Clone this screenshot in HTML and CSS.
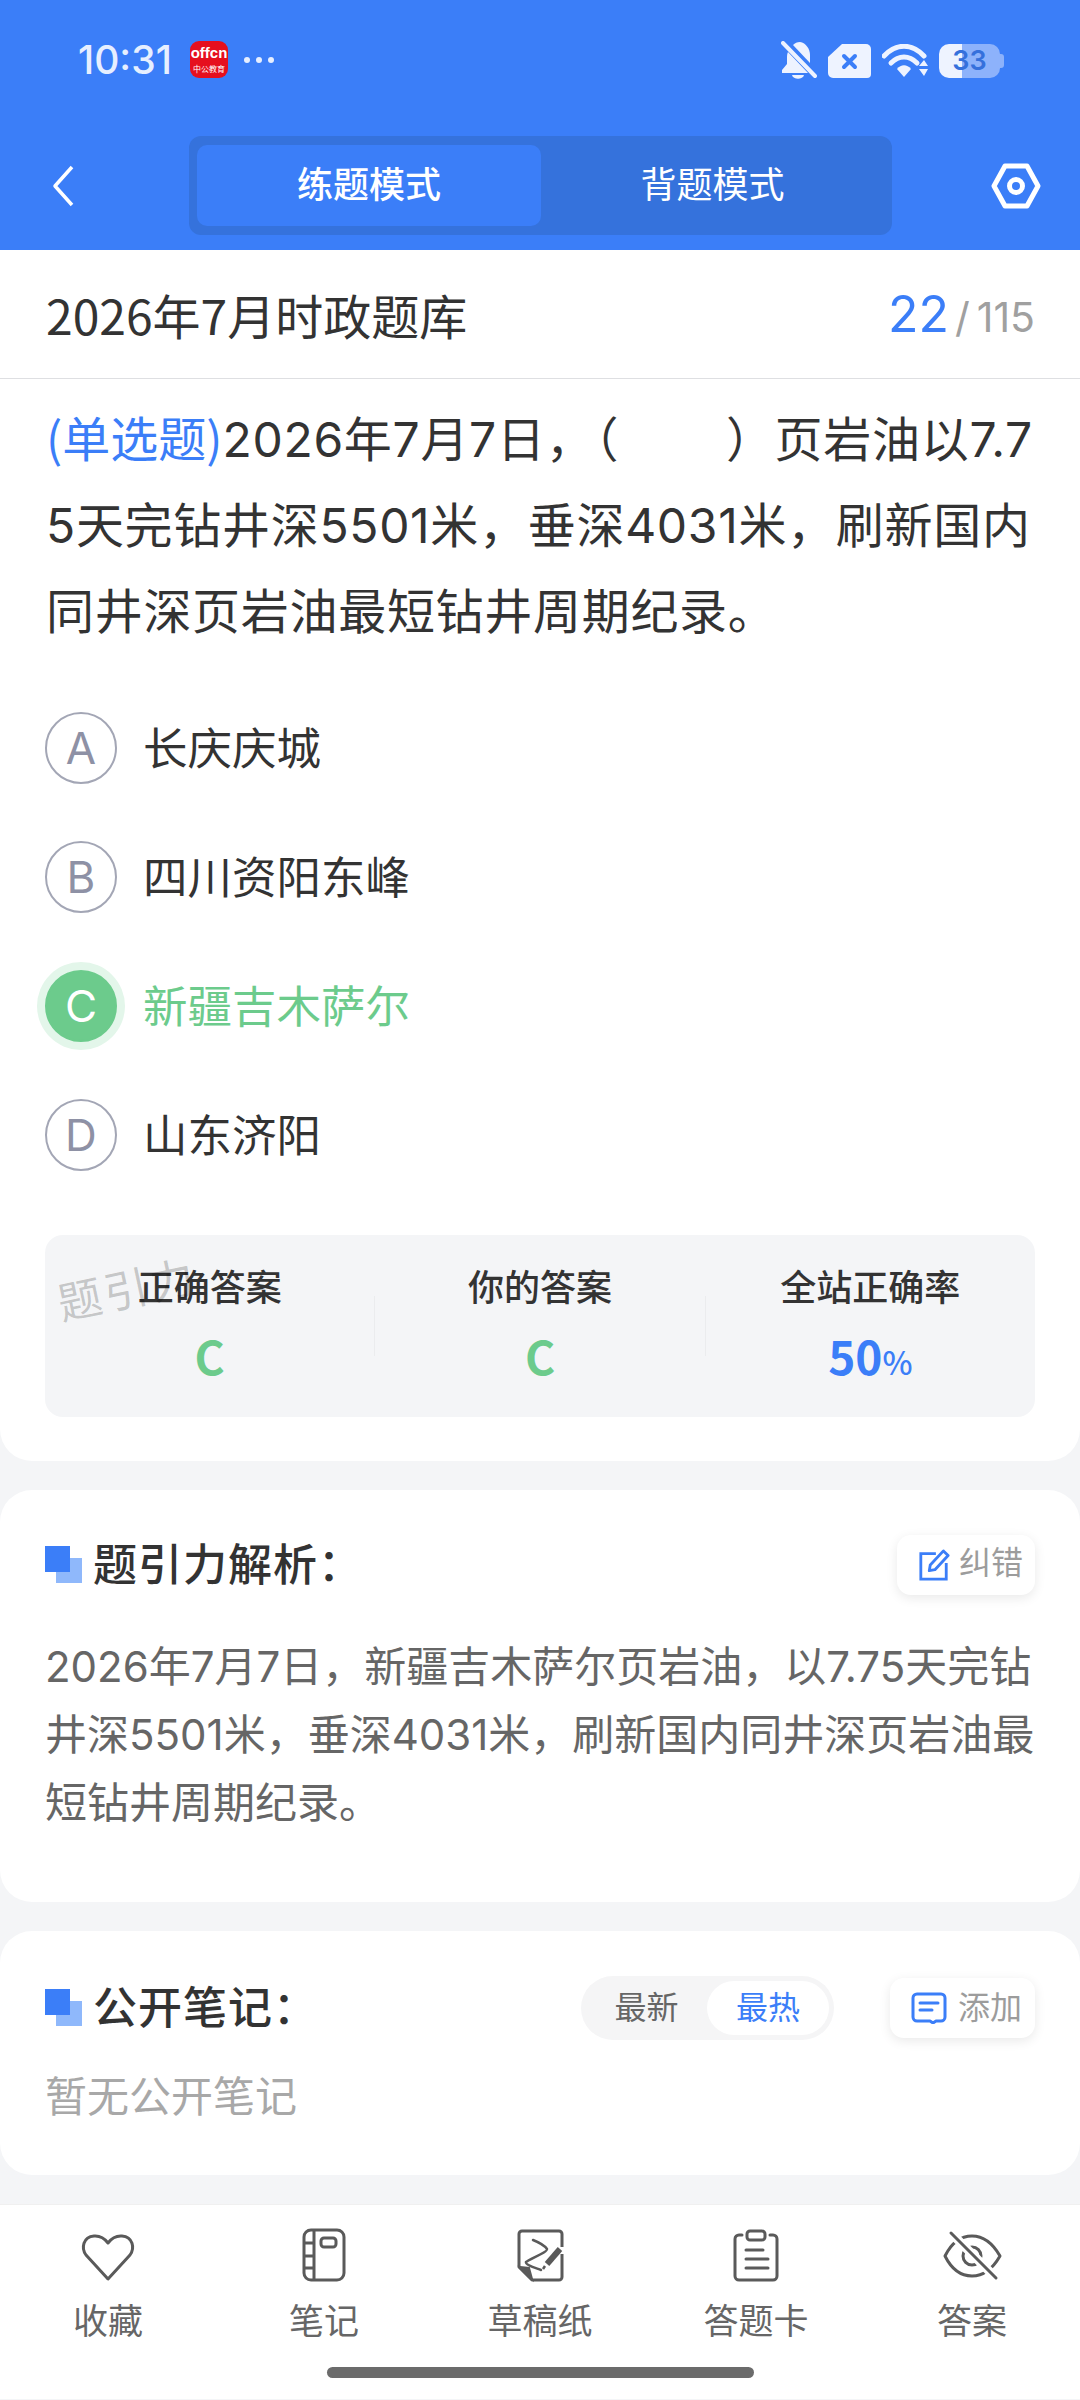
FILE: index.html
```html
<!DOCTYPE html>
<html lang="zh-CN">
<head>
    <meta charset="UTF-8">
    <meta name="viewport" content="width=device-width, initial-scale=1.0">
    <title>练题模式</title>
    <link rel="stylesheet" href="styles.css">
</head>
<body>
    <header class="header">
        <div class="status">
            <span class="time">10:31</span>
            <div class="app-icon"><span class="app-en">offcn</span><span class="app-cn">中公教育</span></div>
            <div class="dots"><i></i><i></i><i></i></div>
            <div class="status-right">
                <svg class="bell" viewBox="0 0 36 39" width="36" height="39">
                    <path d="M7 11c-1 2-1 4-1 6v6l-5 6v3h26z" fill="#eef3ff"/>
                    <path d="M12 4c2-2 4-3 7-3 6 1 10 7 10 13v8z" fill="#eef3ff"/>
                    <path d="M11 34h12c-1 5-11 5-12 0z" fill="#eef3ff"/>
                    <path d="M2 2l32 33" stroke="#eef3ff" stroke-width="4" stroke-linecap="round"/>
                </svg>
                <svg class="sim" viewBox="0 0 43 34" width="43" height="34">
                    <path d="M14 0h24a5 5 0 0 1 5 5v25a4 4 0 0 1-4 4H5a5 5 0 0 1-5-5V13z" fill="#eef3ff"/>
                    <path d="M16 12l11 11M27 12L16 23" stroke="#3b7ef8" stroke-width="4" stroke-linecap="round"/>
                </svg>
                <svg class="wifi" viewBox="0 0 46 34" width="46" height="34">
                    <path d="M2 12c12-13 28-13 40 0" fill="none" stroke="#eef3ff" stroke-width="5" stroke-linecap="round"/>
                    <path d="M9 19c8-8 18-8 26 0" fill="none" stroke="#eef3ff" stroke-width="5" stroke-linecap="round"/>
                    <path d="M15 25c4-5 10-5 14 0l-7 8z" fill="#eef3ff"/>
                    <path d="M37 22l5-6 4 6zM37 25h9l-4 7z" fill="#eef3ff"/>
                </svg>
                <div class="battery"><span class="battery-body">33</span><i class="battery-nub"></i></div>
            </div>
        </div>
        <div class="nav">
            <svg class="back" viewBox="0 0 22 42" width="22" height="42">
                <path d="M20 2L3 21l17 19" fill="none" stroke="#fff" stroke-width="3.500" stroke-linejoin="round"/>
            </svg>
            <div class="tabs">
                <div class="tab tab-active">练题模式</div>
                <div class="tab">背题模式</div>
            </div>
            <svg class="gear" viewBox="0 0 50 46" width="50" height="46">
                <path d="M14 3h22l11 20-11 20H14L3 23z" fill="none" stroke="#fff" stroke-width="5" stroke-linejoin="round"/>
                <circle cx="25" cy="23" r="6.500" fill="none" stroke="#fff" stroke-width="5"/>
            </svg>
        </div>
    </header>

    <section class="card card-question">
        <div class="paper-title">
            <span class="paper-name">2026年7月时政题库</span>
            <span class="progress"><b>22</b><em>/</em>115</span>
        </div>
        <p class="question"><span class="q-type">(单选题)</span>2026年7月7日，（　　&#8201;）页岩油以7.7<br>5天完钻井深5501米，垂深4031米，刷新国内<br>同井深页岩油最短钻井周期纪录。</p>

        <div class="options">
            <div class="option"><span class="letter">A</span><span class="option-text">长庆庆城</span></div>
            <div class="option"><span class="letter">B</span><span class="option-text">四川资阳东峰</span></div>
            <div class="option option-right"><span class="letter">C</span><span class="option-text">新疆吉木萨尔</span></div>
            <div class="option"><span class="letter">D</span><span class="option-text">山东济阳</span></div>
        </div>

        <div class="answers">
            <span class="watermark">题引力</span>
            <div class="stat"><span class="stat-label">正确答案</span><span class="stat-value green">C</span></div>
            <i class="divider"></i>
            <div class="stat"><span class="stat-label">你的答案</span><span class="stat-value green">C</span></div>
            <i class="divider"></i>
            <div class="stat"><span class="stat-label">全站正确率</span><span class="stat-value blue">50<small>%</small></span></div>
        </div>
    </section>

    <section class="card card-analysis">
        <div class="section-head">
            <div class="section-title"><i class="mark"></i><span>题引力解析：</span></div>
            <div class="mini-btn">
                <svg viewBox="0 0 34 34" width="32" height="32">
                    <path d="M19 5H3v27h27V15" fill="none" stroke="#3b7ef8" stroke-width="3"/>
                    <path d="M13 17L27 2l5 5-14 15-6 1z" fill="none" stroke="#3b7ef8" stroke-width="3" stroke-linejoin="round"/>
                </svg>
                <span>纠错</span>
            </div>
        </div>
        <p class="analysis">2026年7月7日，新疆吉木萨尔页岩油，以7.75天完钻<br>井深5501米，垂深4031米，刷新国内同井深页岩油最<br>短钻井周期纪录。</p>
    </section>

    <section class="card card-notes">
        <div class="section-head">
            <div class="section-title"><i class="mark"></i><span>公开笔记：</span></div>
            <div class="toggle">
                <span class="toggle-item">最新</span>
                <span class="toggle-item toggle-on">最热</span>
            </div>
            <div class="mini-btn mini-add">
                <svg viewBox="0 0 36 32" width="36" height="32">
                    <path d="M6 2h24a4 4 0 0 1 4 4v19a4 4 0 0 1-4 4h-5l-3 2-3-2H6a4 4 0 0 1-4-4V6a4 4 0 0 1 4-4z" fill="none" stroke="#3b7ef8" stroke-width="3" stroke-linejoin="round"/>
                    <path d="M9 11h18M9 18h12" stroke="#3b7ef8" stroke-width="3" stroke-linecap="round"/>
                </svg>
                <span>添加</span>
            </div>
        </div>
        <p class="empty">暂无公开笔记</p>
    </section>

    <nav class="toolbar">
        <div class="tools">
            <div class="tool">
                <svg viewBox="0 0 60 60" width="60" height="60">
                    <path d="M30 54L8 30C3 23 5 12 16 11c6-.5 11 3 14 7 3-4 8-7.500 14-7 11 1 13 12 8 19z" fill="none" stroke="#5a5a5a" stroke-width="3" stroke-linejoin="round"/>
                </svg>
                <span>收藏</span>
            </div>
            <div class="tool">
                <svg viewBox="0 0 60 60" width="60" height="60" fill="none" stroke="#5a5a5a" stroke-width="3">
                    <rect x="10" y="5" width="40" height="50" rx="7"/>
                    <path d="M20 5v50M10 18h10M10 31h10M10 43h10"/>
                    <rect x="27" y="13" width="15" height="9" rx="3"/>
                </svg>
                <span>笔记</span>
            </div>
            <div class="tool">
                <svg viewBox="0 0 60 60" width="60" height="60" fill="none" stroke="#5a5a5a" stroke-width="3">
                    <path d="M52 22V9a3 3 0 0 0-3-3H12a3 3 0 0 0-3 3v33l13 13h27a3 3 0 0 0 3-3V29" stroke-linejoin="round"/>
                    <path d="M10 42l9 1 3 11z" fill="#5a5a5a" stroke-width="2"/>
                    <path d="M23 15c5 2 12 6 14 9 1 3-18 10-21 13-1 3 10 6 15 8" stroke-width="2.500" stroke-linecap="round"/>
                    <path d="M37 39l13-15" stroke-width="6"/>
                    <path d="M33 44l2-3" stroke-width="2.500"/>
                </svg>
                <span>草稿纸</span>
            </div>
            <div class="tool">
                <svg viewBox="0 0 60 60" width="60" height="60" fill="none" stroke="#5a5a5a" stroke-width="3">
                    <path d="M16 10h-3a4 4 0 0 0-4 4v37a4 4 0 0 0 4 4h34a4 4 0 0 0 4-4V14a4 4 0 0 0-4-4h-3" stroke-linecap="round"/>
                    <rect x="21" y="6" width="18" height="9" rx="3"/>
                    <path d="M20 25h17M20 34h22M20 43h22" stroke-linecap="round"/>
                </svg>
                <span>答题卡</span>
            </div>
            <div class="tool">
                <svg viewBox="0 0 60 60" width="60" height="60" fill="none" stroke="#5a5a5a" stroke-width="3">
                    <path d="M3 31c7-14 16-20 27-20s20 6 28 20c-8 14-17 20-28 20S10 45 3 31z" stroke-linejoin="round"/>
                    <circle cx="30" cy="31" r="9"/>
                    <path d="M9 8l45 45" stroke="#fff" stroke-width="9"/>
                    <path d="M9 8l45 45" stroke-linecap="round"/>
                </svg>
                <span>答案</span>
            </div>
        </div>
        <div class="home-bar"></div>
    </nav>
</body>
</html>
```

FILE: styles.css
```css
* {
    box-sizing: border-box;
}
body {
    margin: 0;
    width: 1080px;
    background: #f4f5f7;
    font-family: Inter, "Noto Sans CJK SC", sans-serif;
    color: #333;
}
p {
    margin: 0;
}

/* top */
.header {
    height: 250px;
    background: #3b7ef8;
}
.status {
    height: 136px;
    padding: 41px 76px 0 78px;
    display: flex;
    align-items: flex-start;
}
.time {
    width: 94px;
    font-weight: 500;
    font-size: 39px;
    line-height: 37px;
    color: #e6efff;
    white-space: nowrap;
}
.app-icon {
    width: 38px;
    height: 37px;
    margin-left: 18px;
    border-radius: 9px;
    background: #e60f1e;
    color: #fff;
    display: flex;
    flex-direction: column;
    align-items: center;
    overflow: hidden;
}
.app-en {
    font-family: "Liberation Sans", sans-serif;
    font-weight: 700;
    font-size: 15px;
    line-height: 23px;
}
.app-cn {
    font-size: 8px;
    line-height: 10px;
}
.dots {
    display: flex;
    gap: 6px;
    margin: 16px 0 0 16px;
}
.dots i {
    width: 6px;
    height: 6px;
    border-radius: 50%;
    background: #e6efff;
}
.status-right {
    margin-left: auto;
    display: flex;
    align-items: center;
    gap: 11px;
}
.battery {
    display: flex;
    align-items: center;
}
.battery-body {
    width: 61px;
    height: 34px;
    border-radius: 10px;
    background: linear-gradient(90deg, #eef3ff 37%, #8db2fb 37%);
    color: #3570dc;
    font-weight: 600;
    font-size: 27px;
    line-height: 34px;
    text-align: center;
}
.battery-nub {
    width: 4px;
    height: 14px;
    border-radius: 0 3px 3px 0;
    background: #8db2fb;
}

.nav {
    display: flex;
    align-items: center;
    padding: 0 39px 0 52px;
}
.tabs {
    width: 703px;
    height: 99px;
    margin-left: 115px;
    padding: 9px 8px;
    border-radius: 12px;
    background: #3572dc;
    display: flex;
}
.tab {
    flex: 1;
    border-radius: 10px;
    color: #fff;
    font-size: 36px;
    line-height: 81px;
    text-align: center;
}
.tab-active {
    flex: none;
    width: 344px;
    background: #3b7ef8;
    font-weight: 500;
}
.gear {
    margin-left: auto;
}

/* cards */
.card {
    background: #fff;
    border-radius: 32px;
    margin-bottom: 29px;
}
.card-question {
    border-radius: 0 0 32px 32px;
    height: 1211px;
}
.paper-title {
    height: 129px;
    padding: 0 45px 0 46px;
    border-bottom: 1px solid #dedfe2;
    display: flex;
    align-items: center;
    justify-content: space-between;
    font-size: 48px;
}
.paper-name {
    font-family: "Noto Sans CJK SC", sans-serif;
}
.progress {
    color: #a0a0a0;
    font-size: 41px;
    display: flex;
    align-items: baseline;
}
.progress b {
    color: #3b7ef8;
    font-size: 50px;
    font-weight: 400;
}
.progress em {
    font-style: normal;
    margin: 0 7px 0 6px;
}
.question {
    padding: 14px 45px 0 46px;
    font-size: 48px;
    line-height: 86px;
    letter-spacing: 0.7px;
    white-space: nowrap;
}
.q-type {
    color: #3b7ef8;
    font-family: "Noto Sans CJK SC", sans-serif;
    letter-spacing: 0;
}
.options {
    padding: 57px 45px 0;
    display: flex;
    flex-direction: column;
    gap: 57px;
}
.option {
    display: flex;
    align-items: center;
    gap: 26px;
    height: 72px;
    font-size: 44.500px;
}
.option-text {
    margin-bottom: 5px;
}
.letter {
    width: 72px;
    height: 72px;
    border: 2px solid #a3a6b5;
    border-radius: 50%;
    color: #8e91a5;
    font-size: 44px;
    line-height: 68px;
    text-align: center;
}
.option-right {
    color: #6ccb8c;
}
.option-right .letter {
    border-color: #6ccb8c;
    background: #6ccb8c;
    color: #fff;
    box-shadow: 0 0 0 8px #e3f6ea;
}
.answers {
    position: relative;
    height: 182px;
    margin: 64px 45px 0;
    padding-top: 28px;
    border-radius: 18px;
    background: #f4f5f7;
    display: flex;
}
.stat {
    flex: 1;
    display: flex;
    flex-direction: column;
    align-items: center;
}
.stat-label {
    font-size: 36px;
    font-weight: 500;
    line-height: 50px;
    color: #333;
}
.stat-value {
    margin-top: 12px;
    font-family: "Noto Sans CJK SC", sans-serif;
    font-size: 46px;
    font-weight: 700;
    line-height: 60px;
}
.stat-value small {
    font-size: 32px;
    font-weight: 500;
}
.green {
    color: #6ccb8c;
}
.blue {
    color: #3b7ef8;
}
.divider {
    width: 1px;
    height: 60px;
    margin-top: 33px;
    background: #ebecee;
}
.watermark {
    position: absolute;
    left: 12px;
    top: 25px;
    font-size: 44px;
    line-height: 60px;
    color: rgba(0, 0, 0, 0.2);
    letter-spacing: 3px;
    transform: rotate(-12deg);
}

.section-head {
    display: flex;
    align-items: center;
}
.section-title {
    font-size: 44px;
    font-weight: 500;
    letter-spacing: 1px;
    line-height: 50px;
    display: flex;
    align-items: center;
    margin-right: auto;
}
.mark {
    width: 38px;
    height: 38px;
    margin-right: 10px;
    background: linear-gradient(#3b7ef8, #3b7ef8) 0 0 / 25px 26px no-repeat,
        linear-gradient(#8fb8fb, #8fb8fb) 11px 12px / 26px 25px no-repeat;
}
.mini-btn {
    width: 138px;
    height: 60px;
    padding-left: 21px;
    border-radius: 14px;
    background: #fff;
    box-shadow: 0 3px 12px rgba(0, 0, 0, 0.09);
    color: #9c9c9c;
    font-size: 32px;
    line-height: 40px;
    display: flex;
    align-items: center;
    gap: 9px;
}
.mini-btn span {
    margin-bottom: 4px;
}
.card-analysis {
    height: 412px;
    padding: 45px 45px 0;
}
.analysis {
    margin-top: 38px;
    font-size: 42px;
    line-height: 68px;
    color: #666;
    white-space: nowrap;
}
.card-notes {
    height: 244px;
    padding: 45px 45px 0;
}
.toggle {
    width: 253px;
    height: 64px;
    padding: 5px;
    border-radius: 32px;
    background: #f5f5f6;
    display: flex;
    align-items: center;
    font-size: 32px;
    color: #666;
}
.toggle-item {
    flex: 1;
    text-align: center;
    line-height: 54px;
}
.toggle-on {
    flex: none;
    width: 122px;
    background: #fff;
    border-radius: 27px;
    color: #3b7ef8;
}
.mini-add {
    width: 145px;
    margin-left: 56px;
    gap: 11px;
}
.mini-add span {
    margin-bottom: 0;
}
.empty {
    margin-top: 27px;
    font-size: 42px;
    line-height: 60px;
    color: #a8a8a8;
}

/* bottom */
.toolbar {
    height: 195px;
    padding-top: 20px;
    background: #fff;
    border-top: 1px solid #f0f0f0;
}
.tools {
    display: grid;
    grid-template-columns: repeat(5, 216px);
}
.tool {
    display: flex;
    flex-direction: column;
    align-items: center;
    color: #666;
    font-size: 35px;
    line-height: 44px;
}
.tool span {
    margin-top: 14px;
}
.home-bar {
    width: 427px;
    height: 11px;
    margin: 24px auto 0;
    border-radius: 6px;
    background: #6b6b6b;
}
```
